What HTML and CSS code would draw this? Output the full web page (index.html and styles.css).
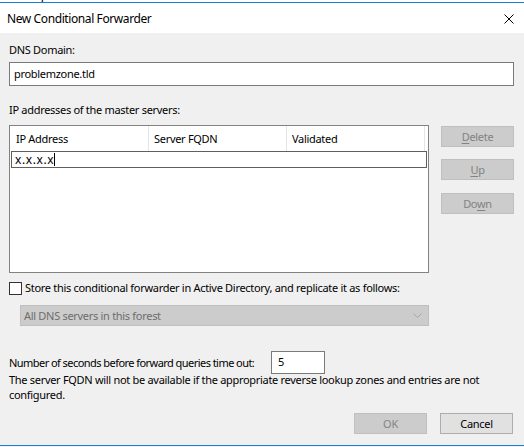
FILE: index.html
```html
<!DOCTYPE html>
<html>
<head>
<meta charset="utf-8">
<title>New Conditional Forwarder</title>
<link rel="stylesheet" href="styles.css">
</head>
<body>
<div class="behind"><span>Help</span></div>
<div class="window">
  <div class="titlebar">
    <span class="title">New Conditional Forwarder</span>
    <svg class="close" width="10" height="10" viewBox="0 0 10 10"><path d="M0.5 0.5 L9.5 9.5 M9.5 0.5 L0.5 9.5" stroke="#000" stroke-width="1" fill="none"/></svg>
  </div>
  <div class="content">
    <div class="label first">DNS Domain:</div>
    <div class="textbox">problemzone.tld</div>
    <div class="label second">IP addresses of the master servers:</div>
    <div class="master">
      <div class="list">
        <div class="list-head">
          <div class="col c1">IP Address</div>
          <div class="col c2">Server FQDN</div>
          <div class="col c3">Validated</div>
        </div>
        <div class="edit-row"><span>x.x.x.x</span><span class="caret"></span></div>
      </div>
      <div class="side-buttons">
        <div class="btn disabled"><u>D</u>elete</div>
        <div class="btn disabled gap1"><u>U</u>p</div>
        <div class="btn disabled gap2">Do<u>w</u>n</div>
      </div>
    </div>
    <div class="check-row">
      <span class="checkbox"></span>
      <span class="check-label">Store this conditional forwarder in Active Directory, and replicate it as follows:</span>
    </div>
    <div class="dropdown">
      <span>All DNS servers in this forest</span>
      <svg class="chev" width="9" height="5" viewBox="0 0 9 5"><path d="M0.5 0.5 L4.5 4.5 L8.5 0.5" stroke="#a6a6a6" stroke-width="1" fill="none"/></svg>
    </div>
    <div class="timeout-row">
      <span class="timeout-label">Number of seconds before forward queries time out:</span>
      <div class="timeout-box">5</div>
    </div>
    <p class="note">The server FQDN will not be available if the appropriate reverse lookup zones and entries are not configured.</p>
    <div class="footer">
      <div class="btn disabled">OK</div>
      <div class="btn normal">Cancel</div>
    </div>
  </div>
</div>
<div class="under"></div>
</body>
</html>
```
FILE: styles.css
```css
* { box-sizing: border-box; }
html, body { margin: 0; padding: 0; }
body {
  width: 524px;
  height: 447px;
  overflow: hidden;
  background: #f0f0f0;
  font-family: "Noto Sans", "Open Sans", sans-serif;
  font-size: 11px;
  letter-spacing: -0.3px;
  color: #000;
}
.behind {
  height: 2px;
  background: #fff;
  overflow: hidden;
}
.behind span {
  display: block;
  margin-top: -11px;
  padding-left: 23px;
  line-height: 12px;
  font-size: 12px;
}
.window {
  height: 444px;
  border-top: 1px solid #1a7fd4;
  border-bottom: 1px solid #1a7fd4;
  display: flex;
  flex-direction: column;
}
.titlebar {
  height: 30px;
  flex: none;
  background: #fff;
  display: flex;
  align-items: center;
  justify-content: space-between;
  padding-left: 7px;
}
.title { font-size: 12px; letter-spacing: -0.4px; line-height: 16px; margin-top: 1px; }
.close { margin-right: 10px; margin-top: 1px; }
.content {
  flex: 1;
  display: flex;
  flex-direction: column;
  padding: 0 10px 0 9px;
}
.label { line-height: 16px; }
.label.first { margin-top: 9px; }
.label.second { margin-top: 16px; }
.textbox {
  margin-top: 4px;
  height: 24px;
  border: 1px solid #7a7a7a;
  background: #fff;
  padding-left: 4px;
  line-height: 21px;
}
.master {
  margin-top: 7px;
  display: flex;
  align-items: flex-start;
}
.list {
  width: 420px;
  height: 148px;
  border: 1px solid #828282;
  background: #fff;
  flex: none;
}
.list-head {
  display: flex;
  height: 25px;
}
.col {
  border-right: 1px solid #e5e5e5;
  line-height: 25px;
  padding-left: 5px;
}
.c1 { width: 139px; padding-left: 6px; }
.c2 { width: 138px; }
.c3 { width: 138px; }
.edit-row {
  margin-left: 1px;
  width: 416px;
  height: 17px;
  border: 1px solid #5f5f5f;
  display: flex;
  align-items: center;
  padding-left: 3px;
  line-height: 15px;
  font-size: 12px;
  letter-spacing: 0.6px;
}
.caret {
  display: inline-block;
  width: 1px;
  height: 13px;
  background: #000;
  margin-left: 0;
}
.side-buttons {
  margin-left: 12px;
  margin-top: 1px;
  display: flex;
  flex-direction: column;
}
.btn {
  width: 73px;
  height: 21px;
  line-height: 19px;
  text-align: center;
  border: 1px solid #adadad;
}
.btn u { text-decoration: underline; text-underline-offset: 2px; }
.btn.disabled {
  background: #cccccc;
  border-color: #bfbfbf;
  color: #838383;
}
.btn.normal {
  background: #e1e1e1;
  border-color: #adadad;
}
.gap1 { margin-top: 12px; }
.gap2 { margin-top: 13px; }
.check-row {
  margin-top: 7px;
  height: 16px;
  display: flex;
  align-items: center;
}
.checkbox {
  width: 13px;
  height: 13px;
  border: 1px solid #333;
  background: #fff;
  flex: none;
}
.check-label { margin-left: 3px; line-height: 16px; }
.dropdown {
  margin-top: 9px;
  margin-left: 11px;
  width: 409px;
  height: 21px;
  background: #cccccc;
  border: 1px solid #bfbfbf;
  color: #6d6d6d;
  display: flex;
  align-items: center;
  justify-content: space-between;
  padding-left: 3px;
  padding-right: 6px;
}
.timeout-row {
  margin-top: 25px;
  height: 23px;
  display: flex;
  align-items: center;
}
.timeout-label { width: 262px; flex: none; line-height: 16px; letter-spacing: -0.55px; }
.timeout-box {
  width: 54px;
  height: 23px;
  border: 1px solid #7a7a7a;
  background: #fff;
  padding-left: 6px;
  line-height: 20px;
}
.note {
  margin: -2px 0 0 0;
  line-height: 15px;
}
.footer {
  margin-top: 11px;
  display: flex;
  justify-content: flex-end;
  gap: 13px;
  padding-right: 1px;
}
.under { height: 1px; background: #f0f0f0; }
```
